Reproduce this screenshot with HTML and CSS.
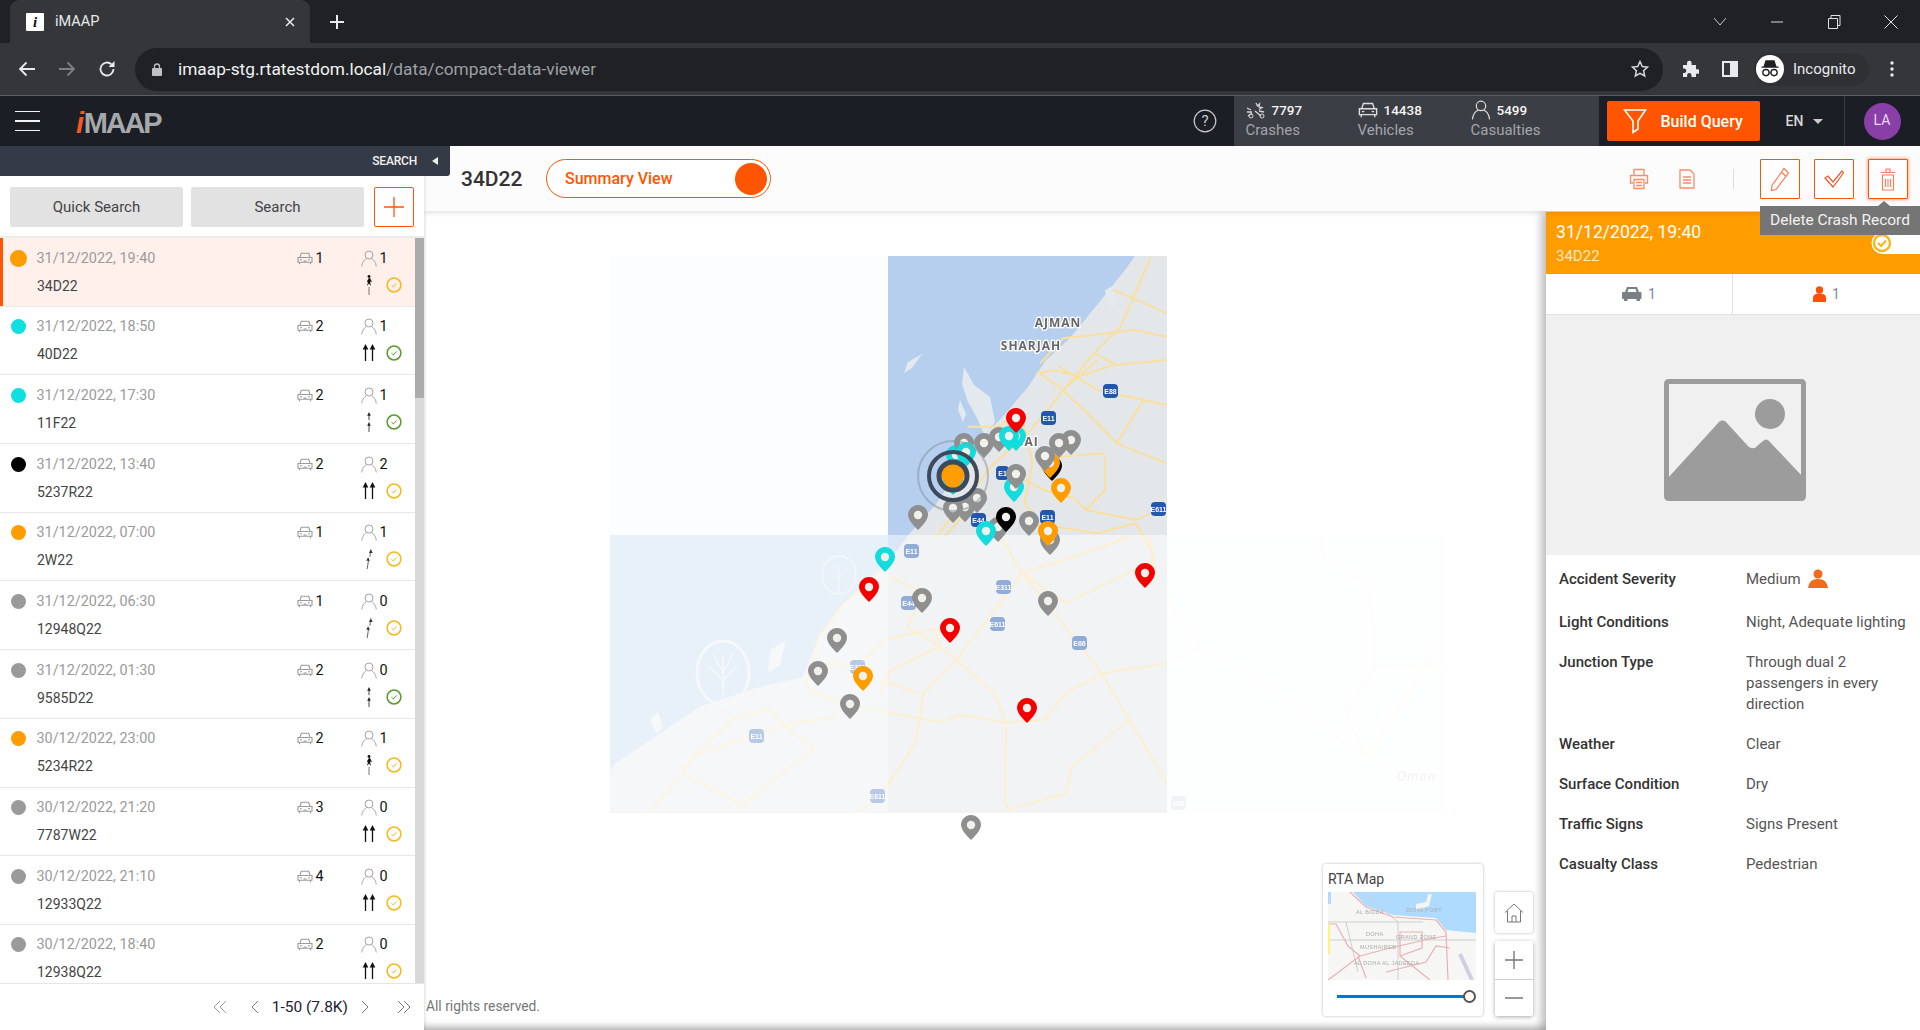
FILE: index.html
```html
<!DOCTYPE html>
<html lang="en">
<head>
    <meta charset="UTF-8">
    <meta name="viewport" content="width=device-width, initial-scale=1.0">
    <title>iMAAP</title>
    <link rel="stylesheet" href="styles.css">
</head>
<body>
    <svg class="defs" width="0" height="0">
        <symbol id="pin" viewBox="0 0 20 25"><path d="M10 0C4.5 0 0 4.5 0 10c0 6 10 15 10 15s10-9 10-15C20 4.5 15.500 0 10 0z"/><circle cx="10" cy="10" r="4.200" fill="#f1f1ec"/></symbol>
        <symbol id="car" viewBox="0 0 16 13"><path d="M3 5l1.300-3.800h7.400L13 5M1 5.500h14v4.800H1zM2.500 10.300v2M13.500 10.300v2M3 7.800h2M11 7.800h2M6.500 9h3" fill="none" stroke="#9b9b9b" stroke-width="1.100"/></symbol>
        <symbol id="person" viewBox="0 0 16 17"><circle cx="8" cy="5" r="4" fill="none" stroke="#a5a5a5"/><path d="M.7 16.500c.4-4.500 3-7 4.800-7.800M15.300 16.500c-.4-4.500-3-7-4.800-7.800" fill="none" stroke="#a5a5a5"/></symbol>
        <symbol id="check" viewBox="0 0 16 16"><circle cx="8" cy="8" r="6.900" fill="none" stroke="currentColor" stroke-width="1.500"/><path d="M5.500 8.200l1.800 1.700 3.300-3.400" fill="none" stroke="currentColor"/></symbol>
        <symbol id="r-dual" viewBox="0 0 14 18"><path d="M3.500 17V4M10.500 17V4" stroke="#111" stroke-width="1.300"/><path d="M3.500 0l2.800 5.500H.7zM10.500 0l2.800 5.500H7.700z" fill="#111"/></symbol>
        <symbol id="r-single" viewBox="0 0 14 22"><path d="M7 9V3M7 22V14" stroke="#333"/><path d="M7 0l2 4H5zM7 11l2 4H5z" fill="#222"/></symbol>
        <symbol id="r-curve" viewBox="0 0 14 22"><path d="M5 22L6.500 12M8 8.500c.4-3 .4-4 .4-5" stroke="#555" fill="none"/><path d="M9 0l2 4.500H7zM6 9l2 4H4z" fill="#333"/></symbol>
        <symbol id="r-ped" viewBox="0 0 14 20"><circle cx="7" cy="1.500" r="1.400" fill="#111"/><path d="M7 3L4.800 6.500 6 7 5 11l2-2.500 2 2.500-1-4.500 2 .5L8 3z" fill="#111"/><path d="M7 12v8" stroke="#777"/></symbol>
    </svg>

    <div class="tabbar">
        <div class="tab">
            <span class="favicon">i</span>
            <span class="tab-title">iMAAP</span>
            <svg class="tab-close" width="10" height="10" viewBox="0 0 10 10"><path d="M1 1l8 8M9 1L1 9" stroke="#e8eaed" stroke-width="1.500"/></svg>
        </div>
        <svg class="tab-new" width="16" height="16" viewBox="0 0 16 16"><path d="M8 1v14M1 8h14" stroke="#e8eaed" stroke-width="2"/></svg>
        <div class="window-btns">
            <svg width="14" height="10" viewBox="0 0 14 10"><path d="M1 1l6 7 6-7" fill="none" stroke="#c8c8c8"/></svg>
            <svg width="14" height="10" viewBox="0 0 14 10"><path d="M1 5h12" stroke="#dcdcdc"/></svg>
            <svg width="14" height="14" viewBox="0 0 14 14"><path d="M1.500 3.500h9v10h-9zM4 3.500V.5h9v10h-2.500" fill="none" stroke="#e0e0e0"/></svg>
            <svg width="14" height="14" viewBox="0 0 14 14"><path d="M.5.500l13 13M13.500.5l-13 13" stroke="#e0e0e0"/></svg>
        </div>
    </div>

    <div class="toolbar">
        <svg class="nav-ico" width="18" height="16" viewBox="0 0 18 16"><path d="M17 8H2M8.500 1.500L2 8l6.500 6.500" fill="none" stroke="#e8eaed" stroke-width="1.800"/></svg>
        <svg class="nav-ico" width="18" height="16" viewBox="0 0 18 16"><path d="M1 8h15M9.500 1.500L16 8l-6.500 6.500" fill="none" stroke="#7d7f82" stroke-width="1.800"/></svg>
        <svg class="nav-ico" width="18" height="18" viewBox="0 0 18 18"><path d="M15.500 9A6.500 6.500 0 1 1 13.500 4.300" fill="none" stroke="#e8eaed" stroke-width="1.800"/><path d="M16.500 1v6h-6z" fill="#e8eaed"/></svg>
        <div class="address">
            <svg width="10" height="13" viewBox="0 0 10 13"><path d="M2.500 6V3.500a2.500 2.500 0 0 1 5 0V6" fill="none" stroke="#bdc1c6" stroke-width="1.300"/><rect y="5" width="10" height="8" rx="1" fill="#bdc1c6"/></svg>
            <span class="url"><b>imaap-stg.rtatestdom.local</b>/data/compact-data-viewer</span>
            <svg class="star" width="18" height="18" viewBox="0 0 18 18"><path d="M9 1.500l2.300 5 5.200.6-3.900 3.600 1.100 5.300L9 13.300 4.300 16l1.100-5.300L1.500 7.100l5.200-.6z" fill="none" stroke="#d5d7da" stroke-width="1.500"/></svg>
        </div>
        <svg class="puzzle" width="18" height="18" viewBox="0 0 18 18"><path d="M2 5h4V3a2.300 2.300 0 0 1 4.600 0v2H15v4.300h2a2.300 2.300 0 0 1 0 4.500h-2V17H10.500v-1.800a2.200 2.200 0 0 0-4.400 0V17H2v-4h1.500a2.300 2.300 0 0 0 0-4.500H2z" fill="#e8eaed"/></svg>
        <svg class="sidepanel" width="16" height="16" viewBox="0 0 16 16"><rect x="1" y="1" width="14" height="14" fill="none" stroke="#e8eaed" stroke-width="2"/><rect x="8" y="1" width="7" height="14" fill="#e8eaed"/><rect x="3" y="3" width="5" height="10" fill="#35363a"/></svg>
        <div class="incognito">
            <span class="incognito-ico">
                <svg width="22" height="20" viewBox="0 0 22 20"><path d="M6.500 1h9l2 6h-13zM1.500 8h19" stroke="#202124" stroke-width="1.300" fill="#202124"/><circle cx="6.500" cy="14" r="3.500" fill="none" stroke="#202124" stroke-width="1.500"/><circle cx="15.500" cy="14" r="3.500" fill="none" stroke="#202124" stroke-width="1.500"/><path d="M10 14h2" stroke="#202124"/></svg>
            </span>
            <span>Incognito</span>
        </div>
        <svg class="kebab" width="4" height="16" viewBox="0 0 4 16"><circle cx="2" cy="2" r="1.700" fill="#e8eaed"/><circle cx="2" cy="8" r="1.700" fill="#e8eaed"/><circle cx="2" cy="14" r="1.700" fill="#e8eaed"/></svg>
    </div>

    <header class="appbar">
        <div class="burger"><i></i><i></i><i></i></div>
        <div class="logo"><em>i</em>MAAP</div>
        <svg class="help" width="24" height="24" viewBox="0 0 24 24"><circle cx="12" cy="12" r="10.800" fill="none" stroke="#c9c9c9" stroke-width="1.200"/><text x="12" y="17" text-anchor="middle" class="help-mark">?</text></svg>
        <div class="stats">
            <div class="stat stat-crash">
                <div class="stat-top">
                    <svg width="20" height="17" viewBox="0 0 20 17"><path d="M10 1l1.500 3 2-2-.5 3 3 .5-3 2M1 6l4 2M1 10h5M2 14l4-3M9 9l6 5M13 9l5 1" fill="none" stroke="#d4d4d4" stroke-width="1.300"/><circle cx="5" cy="14" r="2" fill="none" stroke="#d4d4d4"/><circle cx="16" cy="14" r="2" fill="none" stroke="#d4d4d4"/></svg>
                    <b>7797</b>
                </div>
                <div class="stat-name">Crashes</div>
            </div>
            <div class="stat stat-veh">
                <div class="stat-top">
                    <svg width="20" height="16" viewBox="0 0 16 13"><path d="M3 5l1.300-3.800h7.400L13 5M1 5.500h14v4.800H1zM2.500 10.300v2M13.500 10.300v2M3 7.800h2M11 7.800h2" fill="none" stroke="#e0e0e0" stroke-width="1.100"/></svg>
                    <b>14438</b>
                </div>
                <div class="stat-name">Vehicles</div>
            </div>
            <div class="stat stat-cas">
                <div class="stat-top">
                    <svg width="20" height="20" viewBox="0 0 16 17"><circle cx="8" cy="5" r="4" fill="none" stroke="#e0e0e0"/><path d="M.7 16.500c.4-4.500 3-7 4.800-7.800M15.300 16.500c-.4-4.500-3-7-4.800-7.800" fill="none" stroke="#e0e0e0"/></svg>
                    <b>5499</b>
                </div>
                <div class="stat-name">Casualties</div>
            </div>
        </div>
        <button class="build">
            <svg width="24" height="26" viewBox="0 0 24 26"><path d="M1.500 2h21L15 13v8l-5 3.500V13z" fill="none" stroke="#fff" stroke-width="1.600"/></svg>
            Build Query
        </button>
        <div class="lang">EN <span class="caret"></span></div>
        <div class="user"><span class="avatar">LA</span></div>
    </header>

    <div class="workspace">
        <aside class="left">
            <div class="search-strip"><span>SEARCH</span><i class="strip-arrow"></i></div>
            <div class="search-btns">
                <button class="btn-gray btn-wide">Quick Search</button>
                <button class="btn-gray">Search</button>
                <button class="btn-add"><svg width="20" height="20" viewBox="0 0 20 20"><path d="M10 0v20M0 10h20" stroke="#ff5500" stroke-width="1.300"/></svg></button>
            </div>
            <div class="list-wrap">
                <ul class="list">
                    <li class="row selected">
                        <div class="line"><i class="dot dot-orange"></i><span class="date">31/12/2022, 19:40</span><svg class="i-car"><use href="#car"/></svg><span class="num num-car">1</span><svg class="i-person"><use href="#person"/></svg><span class="num">1</span></div>
                        <div class="line line2"><span class="code">34D22</span><svg class="i-road"><use href="#r-ped"/></svg><svg class="i-check yellow"><use href="#check"/></svg></div>
                    </li>
                    <li class="row">
                        <div class="line"><i class="dot dot-cyan"></i><span class="date">31/12/2022, 18:50</span><svg class="i-car"><use href="#car"/></svg><span class="num num-car">2</span><svg class="i-person"><use href="#person"/></svg><span class="num">1</span></div>
                        <div class="line line2"><span class="code">40D22</span><svg class="i-road"><use href="#r-dual"/></svg><svg class="i-check green"><use href="#check"/></svg></div>
                    </li>
                    <li class="row">
                        <div class="line"><i class="dot dot-cyan"></i><span class="date">31/12/2022, 17:30</span><svg class="i-car"><use href="#car"/></svg><span class="num num-car">2</span><svg class="i-person"><use href="#person"/></svg><span class="num">1</span></div>
                        <div class="line line2"><span class="code">11F22</span><svg class="i-road"><use href="#r-single"/></svg><svg class="i-check green"><use href="#check"/></svg></div>
                    </li>
                    <li class="row">
                        <div class="line"><i class="dot dot-black"></i><span class="date">31/12/2022, 13:40</span><svg class="i-car"><use href="#car"/></svg><span class="num num-car">2</span><svg class="i-person"><use href="#person"/></svg><span class="num">2</span></div>
                        <div class="line line2"><span class="code">5237R22</span><svg class="i-road"><use href="#r-dual"/></svg><svg class="i-check yellow"><use href="#check"/></svg></div>
                    </li>
                    <li class="row">
                        <div class="line"><i class="dot dot-orange"></i><span class="date">31/12/2022, 07:00</span><svg class="i-car"><use href="#car"/></svg><span class="num num-car">1</span><svg class="i-person"><use href="#person"/></svg><span class="num">1</span></div>
                        <div class="line line2"><span class="code">2W22</span><svg class="i-road"><use href="#r-curve"/></svg><svg class="i-check yellow"><use href="#check"/></svg></div>
                    </li>
                    <li class="row">
                        <div class="line"><i class="dot dot-gray"></i><span class="date">31/12/2022, 06:30</span><svg class="i-car"><use href="#car"/></svg><span class="num num-car">1</span><svg class="i-person"><use href="#person"/></svg><span class="num">0</span></div>
                        <div class="line line2"><span class="code">12948Q22</span><svg class="i-road"><use href="#r-curve"/></svg><svg class="i-check yellow"><use href="#check"/></svg></div>
                    </li>
                    <li class="row">
                        <div class="line"><i class="dot dot-gray"></i><span class="date">31/12/2022, 01:30</span><svg class="i-car"><use href="#car"/></svg><span class="num num-car">2</span><svg class="i-person"><use href="#person"/></svg><span class="num">0</span></div>
                        <div class="line line2"><span class="code">9585D22</span><svg class="i-road"><use href="#r-single"/></svg><svg class="i-check green"><use href="#check"/></svg></div>
                    </li>
                    <li class="row">
                        <div class="line"><i class="dot dot-orange"></i><span class="date">30/12/2022, 23:00</span><svg class="i-car"><use href="#car"/></svg><span class="num num-car">2</span><svg class="i-person"><use href="#person"/></svg><span class="num">1</span></div>
                        <div class="line line2"><span class="code">5234R22</span><svg class="i-road"><use href="#r-ped"/></svg><svg class="i-check yellow"><use href="#check"/></svg></div>
                    </li>
                    <li class="row">
                        <div class="line"><i class="dot dot-gray"></i><span class="date">30/12/2022, 21:20</span><svg class="i-car"><use href="#car"/></svg><span class="num num-car">3</span><svg class="i-person"><use href="#person"/></svg><span class="num">0</span></div>
                        <div class="line line2"><span class="code">7787W22</span><svg class="i-road"><use href="#r-dual"/></svg><svg class="i-check yellow"><use href="#check"/></svg></div>
                    </li>
                    <li class="row">
                        <div class="line"><i class="dot dot-gray"></i><span class="date">30/12/2022, 21:10</span><svg class="i-car"><use href="#car"/></svg><span class="num num-car">4</span><svg class="i-person"><use href="#person"/></svg><span class="num">0</span></div>
                        <div class="line line2"><span class="code">12933Q22</span><svg class="i-road"><use href="#r-dual"/></svg><svg class="i-check yellow"><use href="#check"/></svg></div>
                    </li>
                    <li class="row">
                        <div class="line"><i class="dot dot-gray"></i><span class="date">30/12/2022, 18:40</span><svg class="i-car"><use href="#car"/></svg><span class="num num-car">2</span><svg class="i-person"><use href="#person"/></svg><span class="num">0</span></div>
                        <div class="line line2"><span class="code">12938Q22</span><svg class="i-road"><use href="#r-dual"/></svg><svg class="i-check yellow"><use href="#check"/></svg></div>
                    </li>
                </ul>
                <div class="scrollbar"><div class="thumb"></div></div>
            </div>
            <div class="pager">
                <svg width="16" height="14" viewBox="0 0 16 14"><path d="M7 1L1 7l6 6M13 1L7 7l6 6" fill="none" stroke="#9a9a9a"/></svg>
                <svg class="pager-prev" width="9" height="14" viewBox="0 0 9 14"><path d="M8 1L2 7l6 6" fill="none" stroke="#777"/></svg>
                <span class="pager-text">1-50 (7.8K)</span>
                <svg class="pager-next" width="9" height="14" viewBox="0 0 9 14"><path d="M1 1l6 6-6 6" fill="none" stroke="#777"/></svg>
                <svg width="16" height="14" viewBox="0 0 16 14"><path d="M3 1l6 6-6 6M9 1l6 6-6 6" fill="none" stroke="#777"/></svg>
            </div>
        </aside>

        <main class="main">
            <div class="record-bar">
                <span class="record-id">34D22</span>
                <div class="summary-toggle"><span>Summary View</span><i class="knob"></i></div>
                <div class="record-tools">
                    <svg class="tool-print" width="20" height="22" viewBox="0 0 20 22"><path d="M5 7V1.500h10V7M4 15H1.500V7.500h17V15H16M5 11.500h10v9H5zM7 14.500h6M7 17.500h6" fill="none" stroke="#ff8a66" stroke-width="1.300"/></svg>
                    <svg class="tool-doc" width="16" height="20" viewBox="0 0 16 20"><path d="M1 1h10l4 4v14H1z" fill="none" stroke="#ff8a66" stroke-width="1.300"/><path d="M4 8h8M4 11h8M4 14h8" stroke="#f0532a" stroke-width="1.200"/></svg>
                    <i class="tool-sep"></i>
                    <button class="tool-btn"><svg width="20" height="24" viewBox="0 0 20 24"><path d="M14 1.500l4.500 4.500L6 22.500l-4.500 1 .5-5zM11.500 5l4.500 4.500" fill="none" stroke="#ff7a50" stroke-width="1.200"/></svg></button>
                    <button class="tool-btn"><svg width="20" height="18" viewBox="0 0 20 18"><path d="M1 8l3-2 5 6L18 1l1.500 2L9 17z" fill="none" stroke="#f0532a" stroke-width="1.200"/></svg></button>
                    <button class="tool-btn tool-active"><svg width="16" height="24" viewBox="0 0 16 24"><path d="M1 5.500h14M6 5V2h4v3M2.500 8h11v15h-11zM5.500 12v8M8 12v8M10.500 12v8" fill="none" stroke="#ff7a50" stroke-width="1.100"/></svg></button>
                    <div class="tooltip">Delete Crash Record</div>
                </div>
            </div>

            <div class="main-body">
                <section class="map-area">
                    <svg class="map" viewBox="424 212 1122 818">
                        <defs>
                            <clipPath id="tiles">
                                <path d="M610 256h557v279h278v278H610z"/>
                            </clipPath>
                        </defs>
                        <g clip-path="url(#tiles)">
                            <g class="base">
                                <rect x="610" y="256" width="835" height="557" fill="#e3e7ea"/>
                                <path fill="#b6cfee" d="M610 256H1135L1125 270 1101 300 1071 337 1046 360 1028 387 1006 413 983 437 967 457 937 503 910 533 888 563 841 607 819 637 803 677 759 687 699 707 655 737 616 763 610 770z"/>
                                <path fill="#e4e9ef" d="M964 367l10 18 16 12 5 25-10 14-8-18-9-16-6-18zM908 362l14-8-10 14-8 5zM1105 290l4 20 8-6-4-18zM960 400l6 14-3 8-5-12z"/>
                                <ellipse cx="723" cy="673" rx="26" ry="32" fill="none" stroke="#e4e9ef" stroke-width="3"/>
                                <path d="M723 695V655M723 680l-14-14M723 680l14-14M723 672l-10-18M723 672l10-18" stroke="#e4e9ef" stroke-width="1.500"/>
                                <ellipse cx="839" cy="575" rx="17" ry="19" fill="none" stroke="#dfe7ef" stroke-width="1.500"/>
                                <path d="M839 590V565M839 578l-9-9M839 578l9-9" stroke="#dfe7ef"/>
                                <path fill="#e4e9ef" d="M650 720l8-8 5 14-6 8zM770 650l16-10-6 25-12 8z"/>

                                <g class="roads" transform="translate(600 250) scale(.3827 .3333)">
                                    <path d="M1440 20L1395 140 1360 230 1290 310 1240 380 1170 480 1110 560 1030 640 960 740 880 860"/>
                                    <path d="M1480 190L1395 145 1340 120"/>
                                    <path d="M1480 260L1395 240 1290 255 1210 265 1150 340"/>
                                    <path d="M1480 330L1350 345 1290 310"/>
                                    <path d="M1150 370L1210 420 1300 520 1350 580 1480 640"/>
                                    <path d="M1480 465L1420 450 1300 420 1200 350"/>
                                    <path d="M1420 450L1350 580"/>
                                    <path d="M1320 620V720L1270 780 1400 810 1480 770"/>
                                    <path d="M1200 620L1320 610"/>
                                    <path d="M1110 690L1160 720 1240 745 1270 780"/>
                                    <path d="M1100 490L1130 640 1110 760 1150 830"/>
                                    <path d="M900 860L1010 720"/>
                                    <path d="M1190 830L1300 850 1400 820 1440 900 1450 960"/>
                                    <path d="M960 530H1040L1080 500"/>
                                    <path d="M1140 370L1190 360 1250 380 1340 345M1220 410L1300 330"/>
                                </g>
                                <g class="roads" transform="translate(600 530) scale(.5485 .3333)">
                                    <path d="M525 100L440 230 400 320 375 460 390 490 470 530 580 565 620 575 660 555 740 578 810 570 850 490 915 430 1034 400"/>
                                    <path d="M730 20L770 130 815 220 915 430 965 570 1034 760"/>
                                    <path d="M965 20L900 60 770 130 650 390 590 490 575 640 510 800 470 848"/>
                                    <path d="M1000 20L1010 90 850 220 770 130"/>
                                    <path d="M530 140L590 190 560 290 610 340 650 390 720 490 740 580 738 820 745 838 850 790 860 710 965 570"/>
                                    <path d="M520 330L610 295 620 350 530 420 510 490"/>
                                    <path d="M400 400L470 405 520 330"/>
                                    <path d="M510 450L580 490"/>
                                    <path d="M335 585L390 655 260 825 150 730 90 848"/>
                                    <path d="M150 730L170 680 335 585 430 560"/>
                                    <path d="M170 680L240 570 305 535 335 585"/>
                                    <path d="M1034 220L1095 350 1200 450 1395 680 1540 770"/>
                                    <path d="M1095 350L1034 400"/>
                                    <path d="M1315 15L1320 90 1400 160 1410 280V420L1360 540 1395 680 1500 420 1540 300"/>
                                    <path d="M1410 410L1500 405 1540 420"/>
                                </g>

                                <g class="shields">
                                    <rect x="1103" y="384" width="15" height="14" rx="4"/><text x="1110.500" y="394">E88</text>
                                    <rect x="1041" y="411" width="15" height="14" rx="4"/><text x="1048.500" y="421">E11</text>
                                    <rect x="996" y="466" width="13" height="14" rx="4"/><text x="1002.500" y="476">E1</text>
                                    <rect x="971" y="513" width="15" height="14" rx="4"/><text x="978.500" y="523">E44</text>
                                    <rect x="1040" y="510" width="15" height="14" rx="4"/><text x="1047.500" y="520">E11</text>
                                    <rect x="1151" y="502" width="15" height="14" rx="4"/><text x="1158.500" y="512">E611</text>
                                    <rect x="904" y="544" width="15" height="14" rx="4"/><text x="911.500" y="554">E11</text>
                                    <rect x="996" y="580" width="15" height="14" rx="4"/><text x="1003.500" y="590">E311</text>
                                    <rect x="901" y="596" width="15" height="14" rx="4"/><text x="908.500" y="606">E44</text>
                                    <rect x="990" y="617" width="15" height="14" rx="4"/><text x="997.500" y="627">E611</text>
                                    <rect x="1072" y="636" width="15" height="14" rx="4"/><text x="1079.500" y="646">E66</text>
                                    <rect x="749" y="729" width="15" height="14" rx="4"/><text x="756.500" y="739">E11</text>
                                    <rect x="870" y="789" width="15" height="14" rx="4"/><text x="877.500" y="799">E611</text>
                                    <rect x="1171" y="796" width="15" height="14" rx="4"/><text x="1178.500" y="806">E66</text>
                                    <rect x="850" y="660" width="15" height="14" rx="4"/><text x="857.500" y="670">E311</text>
                                </g>
                                <text class="place" x="1058" y="327">AJMAN</text>
                                <text class="place" x="1031" y="350">SHARJAH</text>
                                <text class="place" x="1027" y="446">BAI</text>
                                <text class="place oman" x="1416" y="781">Oman</text>
                            </g>
                            <rect x="610" y="256" width="278" height="279" fill="#fff" fill-opacity=".95"/>
                            <rect x="610" y="535" width="278" height="278" fill="#fff" fill-opacity=".68"/>
                            <rect x="888" y="535" width="279" height="278" fill="#fff" fill-opacity=".5"/>
                            <rect x="1167" y="535" width="278" height="278" fill="#fff" fill-opacity=".93"/>
                        </g>

                        <use href="#pin" class="p-cyan" x="1006" y="426" width="20" height="25"/>
                        <use href="#pin" class="p-gray" x="989" y="427" width="20" height="25"/>
                        <use href="#pin" class="p-gray" x="1061" y="430" width="20" height="25"/>
                        <use href="#pin" class="p-gray" x="1049" y="433" width="20" height="25"/>
                        <use href="#pin" class="p-black" x="1042" y="456" width="20" height="25"/>
                        <use href="#pin" class="p-orange" x="1040" y="453" width="20" height="25"/>
                        <use href="#pin" class="p-gray" x="1035" y="446" width="20" height="25"/>
                        <use href="#pin" class="p-cyan" x="946" y="445" width="20" height="25"/>
                        <use href="#pin" class="p-gray" x="954" y="433" width="20" height="25"/>
                        <use href="#pin" class="p-gray" x="974" y="433" width="20" height="25"/>
                        <use href="#pin" class="p-cyan" x="956" y="442" width="20" height="25"/>
                        <use href="#pin" class="p-cyan" x="999" y="426" width="20" height="25"/>
                        <use href="#pin" class="p-red" x="1006" y="408" width="20" height="25"/>
                        <use href="#pin" class="p-cyan" x="1004" y="477" width="20" height="25"/>
                        <use href="#pin" class="p-gray" x="1006" y="464" width="20" height="25"/>
                        <use href="#pin" class="p-orange" x="1051" y="478" width="20" height="25"/>
                        <use href="#pin" class="p-gray" x="967" y="488" width="20" height="25"/>
                        <use href="#pin" class="p-gray" x="955" y="497" width="20" height="25"/>
                        <use href="#pin" class="p-gray" x="943" y="498" width="20" height="25"/>
                        <use href="#pin" class="p-gray" x="908" y="505" width="20" height="25"/>
                        <use href="#pin" class="p-gray" x="988" y="517" width="20" height="25"/>
                        <use href="#pin" class="p-black" x="996" y="507" width="20" height="25"/>
                        <use href="#pin" class="p-gray" x="1019" y="511" width="20" height="25"/>
                        <use href="#pin" class="p-cyan" x="976" y="521" width="20" height="25"/>
                        <use href="#pin" class="p-gray" x="1040" y="530" width="20" height="25"/>
                        <use href="#pin" class="p-orange" x="1038" y="521" width="20" height="25"/>
                        <use href="#pin" class="p-cyan" x="875" y="547" width="20" height="25"/>
                        <use href="#pin" class="p-red" x="859" y="577" width="20" height="25"/>
                        <use href="#pin" class="p-gray" x="912" y="588" width="20" height="25"/>
                        <use href="#pin" class="p-red" x="940" y="618" width="20" height="25"/>
                        <use href="#pin" class="p-gray" x="1038" y="591" width="20" height="25"/>
                        <use href="#pin" class="p-red" x="1135" y="563" width="20" height="25"/>
                        <use href="#pin" class="p-gray" x="827" y="628" width="20" height="25"/>
                        <use href="#pin" class="p-gray" x="808" y="661" width="20" height="25"/>
                        <use href="#pin" class="p-orange" x="853" y="666" width="20" height="25"/>
                        <use href="#pin" class="p-gray" x="840" y="694" width="20" height="25"/>
                        <use href="#pin" class="p-red" x="1017" y="698" width="20" height="25"/>
                        <use href="#pin" class="p-gray" x="961" y="815" width="20" height="25"/>

                        <use href="#pin" class="p-cyan" x="943" y="470" width="20" height="25"/>
                        <use href="#pin" class="p-orange" x="941" y="462" width="24" height="30"/>
                        <circle cx="953" cy="476" r="35" fill="none" stroke="#8d95a0" stroke-opacity=".55" stroke-width="2"/>
                        <circle cx="953" cy="476" r="24" fill="none" stroke="#3e4a5c" stroke-width="4"/>
                        <circle cx="953" cy="476" r="14" fill="none" stroke="#3e4a5c" stroke-width="5"/>
                        <circle cx="953" cy="476" r="7" fill="#ff9d00"/>
                    </svg>

                    <span class="rights">All rights reserved.</span>

                    <div class="basemap">
                        <div class="basemap-title">RTA Map</div>
                        <svg class="basemap-thumb" width="148" height="88" viewBox="0 0 148 88">
                            <rect width="148" height="88" fill="#f6f6f4"/>
                            <path d="M25 0L38 14 65 23 108 26 118 38 148 41V0z" fill="#aedbff"/>
                            <path d="M0 0h3v12H0z" fill="#aedbff"/>
                            <path d="M88 12l10-2 2-8 4 0-3 12-13 4z" fill="#f4f4f0"/>
                            <path d="M0 30h70l25 0M35 0L70 30V88M0 48h148M18 30L30 80" fill="none" stroke="#cfcfcf"/>
                            <path d="M22 0L38 15 65 25 108 28 118 40 120 88M0 32h8l12 22 12 10L0 88M32 64l30-8 44-10 12-2M72 40h22v16l-22 8zM72 64l30 24M58 80l40-10 10-16 14 2M30 64l8 22" fill="none" stroke="#eab0b2" stroke-width="1.200"/>
                            <path d="M132 62l12 26" stroke="#cfcfe3" stroke-width="4"/>
                            <path d="M0 32h2v30H0z" fill="#fff080"/>
                            <g class="thumb-labels">
                                <text x="28" y="22">AL BIDDA</text>
                                <text x="78" y="20">DOHA PORT</text>
                                <text x="38" y="44">DOHA</text>
                                <text x="68" y="47">GRAND ZONE</text>
                                <text x="32" y="57">MUSHAIREB</text>
                                <text x="26" y="73">AL DOHA AL JADEEDA</text>
                            </g>
                        </svg>
                        <div class="slider"><i class="slider-knob"></i></div>
                    </div>
                    <div class="map-ctrls">
                        <button class="ctrl ctrl-home"><svg width="20" height="20" viewBox="0 0 20 20"><path d="M1 9.500L10 1l9 8.500M3.500 8v11h13V8M8 19v-6h4v6" fill="none" stroke="#777"/></svg></button>
                        <div class="ctrl-zoom">
                            <button class="ctrl"><svg width="18" height="18" viewBox="0 0 18 18"><path d="M9 0v18M0 9h18" stroke="#777" stroke-width="1.400"/></svg></button>
                            <button class="ctrl"><svg width="18" height="18" viewBox="0 0 18 18"><path d="M0 9h18" stroke="#777" stroke-width="1.400"/></svg></button>
                        </div>
                    </div>
                </section>

                <aside class="detail">
                    <div class="detail-head">
                        <div class="detail-date">31/12/2022, 19:40</div>
                        <div class="detail-code">34D22</div>
                        <div class="head-toggle"><svg width="22" height="22" viewBox="0 0 22 22"><circle cx="11" cy="11" r="10.500" fill="#fff"/><circle cx="11" cy="11" r="8" fill="none" stroke="#f8b81c" stroke-width="2.400"/><path d="M7 11l3 3 5-5.500" fill="none" stroke="#f8b81c" stroke-width="2.200"/></svg></div>
                    </div>
                    <div class="detail-tabs">
                        <div class="detail-tab"><svg width="20" height="16" viewBox="0 0 20 16"><path d="M3 6l2-5h10l2 5h1.500a1 1 0 0 1 1 1v5a1 1 0 0 1-1 1H18v2h-3.500v-2h-9v2H2v-2H1a1 1 0 0 1-1-1V7a1 1 0 0 1 1-1zM5.500 6h9l-1-3h-7z" fill="#7b7f86" fill-rule="evenodd"/></svg>1</div>
                        <div class="detail-tab"><svg width="13" height="16" viewBox="0 0 13 16"><circle cx="6.500" cy="4" r="3.700" fill="#ff4f0a"/><path d="M0 16v-4c0-3 2-4.500 6.500-4.500S13 9 13 12v4z" fill="#ff4f0a"/></svg>1</div>
                    </div>
                    <div class="detail-photo">
                        <svg width="142" height="122" viewBox="0 0 142 122"><rect x="2.500" y="2.500" width="137" height="117" rx="2" fill="none" stroke="#9c9c9c" stroke-width="5"/><circle cx="106" cy="35" r="15" fill="#9c9c9c"/><path d="M3 100l52-57c2-2 5-2 7 0l22 24c3 3 7 3 9 0l6-5c2-2 4-2 6 0l34 36v21H3z" fill="#9c9c9c"/></svg>
                    </div>
                    <dl class="facts">
                        <div class="fact"><dt>Accident Severity</dt><dd>Medium <svg class="fact-ico" width="20" height="19" viewBox="0 0 20 19"><circle cx="10" cy="5" r="4.500" fill="#f26a1b"/><path d="M0 19c1-6 4-9 10-9s9 3 10 9z" fill="#f26a1b"/></svg></dd></div>
                        <div class="fact"><dt>Light Conditions</dt><dd>Night, Adequate lighting</dd></div>
                        <div class="fact"><dt>Junction Type</dt><dd>Through dual 2 passengers in every direction</dd></div>
                        <div class="fact"><dt>Weather</dt><dd>Clear</dd></div>
                        <div class="fact"><dt>Surface Condition</dt><dd>Dry</dd></div>
                        <div class="fact"><dt>Traffic Signs</dt><dd>Signs Present</dd></div>
                        <div class="fact"><dt>Casualty Class</dt><dd>Pedestrian</dd></div>
                    </dl>
                </aside>
            </div>
        </main>
    </div>
</body>
</html>
```

FILE: styles.css
```css
* { box-sizing: border-box; list-style: none; }
html, body { margin: 0; padding: 0; }
body {
    width: 1920px; height: 1030px; overflow: hidden;
    font-family: Roboto, "Liberation Sans", sans-serif;
    background: #fff;
    display: flex; flex-direction: column;
}
button { font-family: inherit; cursor: pointer; }
ul, dl, dd { margin: 0; padding: 0; }
.defs { position: absolute; }

/* browser chrome */
.tabbar { height: 43px; background: #202124; display: flex; align-items: center; padding-left: 10px; }
.tab {
    width: 300px; height: 43px; background: #35363a;
    border-radius: 9px 9px 0 0;
    display: flex; align-items: center; padding: 0 15px 0 16px;
    color: #e8eaed; font-size: 14px;
}
.favicon {
    width: 18px; height: 18px; background: #fff; border-radius: 1px;
    color: #111; font: italic bold 15px/18px "Liberation Serif", serif; text-align: center;
}
.tab-title { margin-left: 11px; flex: 1; font-size: 14.5px; }
.tab-new { margin-left: 19px; }
.window-btns { margin-left: auto; display: flex; align-items: center; gap: 43px; padding-right: 22px; }
.toolbar { height: 53px; background: #35363a; border-bottom: 1px solid #5d5e61; display: flex; align-items: center; padding: 0 0 0 18px; }
.nav-ico { margin-right: 22px; }
.nav-ico:nth-child(3) { margin-right: 28px; }
.address {
    width: 1528px; height: 43px; margin-left: -9px; background: #202124; border-radius: 22px;
    display: flex; align-items: center; padding-left: 17px; padding-right: 14px;
}
.url { margin-left: 16px; font-size: 17.3px; color: #9aa0a6; }
.url b { font-weight: 400; color: #f1f3f4; }
.star { margin-left: auto; }
.puzzle { margin-left: 18px; }
.sidepanel { margin-left: 23px; }
.incognito {
    margin-left: 16px; width: 115px; height: 33px; border-radius: 17px; background: #2f3033;
    display: flex; align-items: center; color: #e8eaed; font-size: 15px; gap: 9px; padding-left: 2px;
}
.incognito-ico {
    width: 28px; height: 28px; border-radius: 50%; background: #fff;
    display: flex; align-items: center; justify-content: center;
}
.incognito-ico svg { width: 20px; height: 18px; }
.kebab { margin-left: 21px; }

/* app header */
.appbar { height: 50px; background: #1b1e24; display: flex; align-items: center; color: #fff; flex-shrink: 0; }
.burger { width: 25px; margin-left: 15px; display: flex; flex-direction: column; gap: 8px; }
.burger i { height: 1.500px; background: #f2f2f2; display: block; }
.logo {
    margin-left: 36px; width: 90px; padding-top: 4px;
    font: bold 29px "Liberation Sans", sans-serif; letter-spacing: -2.2px; color: #a6a8ab;
}
.logo em { color: #f15a22; font-style: italic; margin-right: 2px; }
.help { margin-left: 1027px; }
.help-mark { fill: #c9c9c9; font-size: 15px; }
.stats { margin-left: 16.500px; width: 365px; height: 50px; background: #3b3e44; display: flex; padding-left: 12px; }
.stat { padding-top: 4px; }
.stat-crash { width: 112px; }
.stat-veh { width: 113px; }
.stat-top { height: 20px; display: flex; align-items: center; gap: 6px; font-size: 13.500px; }
.stat-top b { font-weight: 500; color: #f5f5f5; }
.stat-name { margin-top: 1px; font-size: 15px; color: #a3a6ab; }
.build {
    margin-left: 8px; width: 153px; height: 40px; border: none; border-radius: 2px;
    background: #ff5500; color: #fff; font-size: 16px; font-weight: 500;
    display: flex; align-items: center; gap: 14px; padding-left: 16px;
}
.lang { margin-left: 26px; width: 58px; font-size: 14px; color: #d6d6d6; display: flex; align-items: center; gap: 10px; font-weight: 500; }
.caret { border: 5px solid transparent; border-top-color: #ccc; border-bottom: 0; }
.user { height: 50px; border-left: 1px solid #3a3d42; padding-left: 19px; display: flex; align-items: center; }
.avatar {
    width: 37px; height: 37px; border-radius: 50%; background: #8a3fa8;
    color: #e8d8ee; font-size: 14px; text-align: center; line-height: 35px;
}

.workspace { flex: 1; display: flex; min-height: 0; }

/* left list */
.left { width: 424px; flex-shrink: 0; display: flex; flex-direction: column; background: #fff; position: relative; z-index: 3; box-shadow: 1px 0 3px rgba(0,0,0,.12); }
.search-strip {
    width: 450px; height: 30px; background: #343a46; color: #f0f0f0;
    border-radius: 0 0 3px 0;
    font-size: 12px; font-weight: 500; letter-spacing: -.2px;
    display: flex; align-items: center; justify-content: flex-end; padding-right: 12px;
    position: relative; z-index: 4;
}
.strip-arrow { margin-left: 15px; border: 4.500px solid transparent; border-right: 6px solid #f0f0f0; border-left: 0; }
.search-btns { height: 62px; padding: 11px 10px 0; display: flex; border-bottom: 2px solid #ececec; flex-shrink: 0; }
.btn-gray {
    width: 173px; height: 40px; margin-right: 8px; border: none; border-radius: 2px;
    background: #e2e2e2; color: #444; font-size: 15px;
}
.btn-gray + .btn-gray { margin-right: 10px; }
.btn-add { width: 40px; height: 40px; padding: 0; border: 1px solid #ff5500; border-radius: 2px; background: #fff; display: flex; align-items: center; justify-content: center; }

.list-wrap { flex: 1; min-height: 0; display: flex; overflow: hidden; }
.list { flex: 1; }
.row { height: 68.7px; border-bottom: 1px solid #e8e8e8; padding: 10px 0 0 0; }
.row.selected { background: #fff0ec; box-shadow: inset 3px 0 0 #ff5500; }
.line { display: flex; align-items: center; height: 20px; position: relative; }
.line2 { margin-top: 7.500px; height: 20px; }
.dot { width: 15px; height: 15px; border-radius: 50%; margin-left: 11px; flex-shrink: 0; }
.selected .dot { width: 17px; height: 17px; margin-left: 10px; margin-right: -1px; }
.dot-orange { background: #ff9d00; }
.dot-cyan { background: #0fdfe0; }
.dot-black { background: #000; }
.dot-gray { background: #9a9a9a; }
.date { margin-left: 10.500px; width: 260px; font-size: 14.400px; color: #9a9a9a; }
.i-car { width: 16px; height: 13px; }
.i-person { width: 16px; height: 17px; margin-left: 33px; }
.num { margin-left: 3px; width: 12px; font-size: 14.400px; color: #111; }
.num-car { width: 12px; }
.code { margin-left: 37px; width: 326px; font-size: 14px; color: #444; }
.i-road { width: 14px; height: 20px; margin-left: -1px; margin-top: -2px; }
.i-check { width: 16px; height: 16px; margin-left: 9.500px; margin-top: -2px; }
.yellow { color: #f8b81c; }
.green { color: #5a9a2a; }
.scrollbar { width: 9px; background: #d9d9d9; flex-shrink: 0; }
.thumb { height: 160px; background: #ababab; }
.pager {
    height: 47px; flex-shrink: 0; border-top: 1px solid #e6e6e6; background: #fff;
    display: flex; align-items: center; justify-content: flex-end; padding-right: 13px;
    font-size: 15.500px; color: #223;
}
.pager-prev { margin-left: 21px; }
.pager-text { margin: 0 13px; }
.pager-next { margin-right: 25px; }

/* main */
.main { flex: 1; display: flex; flex-direction: column; min-width: 0; }
.record-bar {
    height: 65px; flex-shrink: 0; background: #fcfcfc; position: relative; z-index: 2;
    display: flex; align-items: center; padding-left: 37px;
    box-shadow: 0 2px 5px rgba(0,0,0,.12);
}
.record-id { font-size: 21px; font-weight: 500; color: #333; width: 85px; }
.summary-toggle {
    width: 225px; height: 39px; border: 1px solid #ff5500; border-radius: 20px; background: #fff;
    display: flex; align-items: center; justify-content: space-between; padding: 0 3px 0 18px;
    color: #ff5500; font-size: 16px; font-weight: 500;
}
.knob { width: 32px; height: 32px; background: #ff5500; border-radius: 50%; }
.record-tools { margin-left: auto; display: flex; align-items: center; position: relative; padding-right: 12px; }
.tool-doc { margin-left: 30px; }
.tool-sep { width: 1px; height: 20px; background: #ddd; margin: 0 26px 0 38px; }
.tool-btn {
    width: 40px; height: 40px; padding: 0; margin-left: 14px; background: #fff;
    border: 1px solid #ff5500; border-radius: 1px; display: flex; align-items: center; justify-content: center;
}
.tool-sep + .tool-btn { margin-left: 0; }
.tool-active { box-shadow: 0 0 3px 1px rgba(255,100,50,.5); }
.tooltip {
    position: absolute; right: 0; top: 47px; width: 160px; height: 29px; z-index: 5;
    background: #757575; color: #f2f2f2; font-size: 15.500px; line-height: 29px; text-align: center; white-space: nowrap;
}
.tooltip::before {
    content: ""; position: absolute; right: 30px; top: -5px;
    border: 6px solid transparent; border-top: 0; border-bottom: 5px solid #757575;
}

.main-body { flex: 1; min-height: 0; display: flex; }
.map-area { flex: 1; position: relative; background: #fff; overflow: hidden; box-shadow: inset 0 -9px 8px -7px rgba(0,0,0,.4); }
.map { position: absolute; left: 0; top: 1px; width: 1122px; height: 818px; }
.base { filter: blur(.35px); }
.roads path { fill: none; stroke: #fadf9e; stroke-width: 2px; vector-effect: non-scaling-stroke; }
.shields rect { fill: #2158ae; }
.shields text { fill: #fff; font: bold 7px "Liberation Sans", sans-serif; text-anchor: middle; }
.place { fill: #666; stroke: #fff; stroke-width: 2.500px; paint-order: stroke; font: bold 12px "Open Sans", sans-serif; text-anchor: middle; letter-spacing: 1px; }
.oman { font-style: italic; fill: #777; letter-spacing: 0; font-size: 14px; }
.p-gray { fill: #8f8f8f; }
.p-cyan { fill: #12dcdc; }
.p-red { fill: #f50000; }
.p-orange { fill: #ff9d00; }
.p-black { fill: #000; }
.rights { position: absolute; left: 2px; top: 787px; font-size: 13.800px; color: #777; }

.basemap {
    position: absolute; left: 899px; top: 653px; width: 160px; height: 152px; padding: 6px 5px 5px;
    background: #fff; border-radius: 3px; box-shadow: 0 0 3px rgba(0,0,0,.3);
}
.basemap-title { font-size: 14px; height: 22px; line-height: 18px; color: #444; }
.basemap-thumb { display: block; filter: blur(.4px); }
.thumb-labels text { font: 5.500px "Liberation Sans", sans-serif; fill: #aaa; letter-spacing: .4px; }
.slider { position: relative; margin: 15px 0 0 9px; width: 133px; height: 3px; background: #0078d4; }
.slider-knob {
    position: absolute; right: -6px; top: -5px; width: 13px; height: 13px; border-radius: 50%;
    background: #fff; border: 2px solid #555;
}
.map-ctrls { position: absolute; left: 1071px; top: 681px; width: 38px; display: flex; flex-direction: column; gap: 8px; }
.ctrl {
    width: 38px; height: 41px; padding: 0; border: none; background: #fff;
    display: flex; align-items: center; justify-content: center;
}
.ctrl-home { border-radius: 3px; box-shadow: 0 0 3px rgba(0,0,0,.3); }
.ctrl-zoom { border-radius: 3px; box-shadow: 0 1px 4px rgba(0,0,0,.35); overflow: hidden; }
.ctrl-zoom .ctrl { height: 37.500px; }
.ctrl-zoom .ctrl + .ctrl { border-top: 1px solid #ccc; }

/* right detail */
.detail { width: 374px; flex-shrink: 0; margin-top: 1px; background: #fff; position: relative; box-shadow: -5px 0 8px rgba(0,0,0,.25); }
.detail-head { height: 62px; background: #ff9d00; padding: 9px 0 0 10px; color: #fff; position: relative; }
.detail-date { font-size: 17.600px; line-height: 22px; }
.detail-code { font-size: 15px; margin-top: 3.500px; color: #ffe9c4; line-height: 18px; }
.head-toggle { position: absolute; right: 0; top: 21px; width: 48px; height: 21px; background: #fff; border-radius: 11px 0 0 11px; }
.head-toggle svg { display: block; margin-top: -1px; margin-left: -1px; }
.detail-tabs { height: 41px; display: flex; border-bottom: 1px solid #e2e2e2; }
.detail-tab { width: 186px; display: flex; align-items: center; justify-content: center; gap: 6px; font-size: 14px; color: #7d8a9c; }
.detail-tab + .detail-tab { flex: 1; border-left: 1px solid #e2e2e2; }
.detail-photo { height: 240px; background: #f0f0f0; display: flex; align-items: center; justify-content: center; padding: 10px 1px 0 4px; }
.facts { padding: 13.500px 12px 0 13px; font-size: 15px; color: #555; }
.fact { display: flex; margin-bottom: 19px; line-height: 21px; }
.fact dt { width: 187px; flex-shrink: 0; font-weight: 500; color: #333; }
.fact dd { flex: 1; }
.fact:first-child { margin-bottom: 22.500px; }
.fact-ico { vertical-align: -4px; margin-left: 4px; }
```
